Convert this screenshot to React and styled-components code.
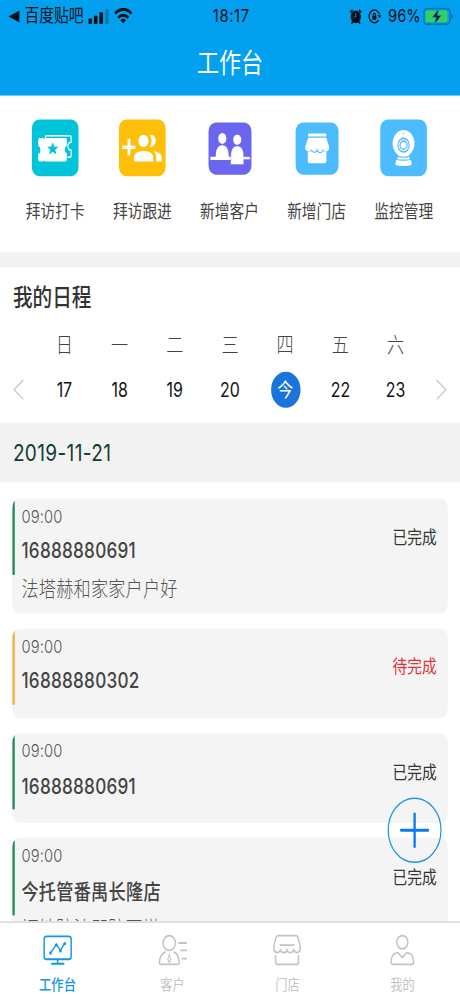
import styled, { createGlobalStyle } from "styled-components"

const actions = [
    { label: "拜访打卡", color: "#00c4d9", size: 38, icon: <TicketIcon /> },
    { label: "拜访跟进", color: "#ffbe08", size: 38, icon: <FollowIcon /> },
    { label: "新增客户", color: "#6a66f0", size: 35, icon: <PeopleIcon /> },
    { label: "新增门店", color: "#4cbcff", size: 35, icon: <StoreIcon /> },
    { label: "监控管理", color: "#4cbcff", size: 38, icon: <CameraIcon /> },
]

const weekdays = ["日", "一", "二", "三", "四", "五", "六"]
const days = ["17", "18", "19", "20", "今", "22", "23"]

const schedules = [
    { time: "09:00", title: "16888880691", desc: "法塔赫和家家户户好", done: true },
    { time: "09:00", title: "16888880302", done: false },
    { time: "09:00", title: "16888880691", done: true },
    { time: "09:00", title: "今托管番禺长隆店", desc: "福地防汕即防歪墩", done: true },
]

const tabs = [
    { label: "工作台", icon: <BoardIcon />, active: true },
    { label: "客户", icon: <ClientIcon /> },
    { label: "门店", icon: <ShopIcon /> },
    { label: "我的", icon: <MineIcon /> },
]

export default function App() {
    return (
        <>
            <GlobalStyle />
            <Screen>
                <Header>
                    <StatusBar>
                        <StatusLeft>
                            <BackApp />
                            <span>百度贴吧</span>
                            <SignalIcon />
                            <WifiIcon />
                        </StatusLeft>
                        <Clock>18:17</Clock>
                        <StatusRight>
                            <AlarmIcon />
                            <LockIcon />
                            <Percent>96%</Percent>
                            <BatteryIcon />
                        </StatusRight>
                    </StatusBar>
                    <NavTitle>工作台</NavTitle>
                </Header>

                <Actions>
                    {actions.map((item) => (
                        <Action key={item.label}>
                            <IconSlot>
                                <IconTile $color={item.color} $size={item.size}>{item.icon}</IconTile>
                            </IconSlot>
                            <ActionLabel>{item.label}</ActionLabel>
                        </Action>
                    ))}
                </Actions>

                <Calendar>
                    <SectionTitle>我的日程</SectionTitle>
                    <Week>
                        <span />
                        {weekdays.map((d) => <Weekday key={d}>{d}</Weekday>)}
                        <span />
                    </Week>
                    <Days>
                        <Arrow viewBox="0 0 10 14"><path d="M9 .6 1.5 7 9 13.4" /></Arrow>
                        {days.map((d) => <Day key={d} $today={d === "今"}>{d}</Day>)}
                        <Arrow viewBox="0 0 10 14"><path d="M1 .6 8.5 7 1 13.4" /></Arrow>
                    </Days>
                </Calendar>

                <DateBar>2019-11-21</DateBar>

                <List>
                    {schedules.map((item, index) => (
                        <Card key={index} $tall={!!item.desc}>
                            <Bar $done={item.done} />
                            <CardBody>
                                <Time>{item.time}</Time>
                                <CardTitle>{item.title}</CardTitle>
                                {item.desc && <Desc>{item.desc}</Desc>}
                            </CardBody>
                            <State $done={item.done}>{item.done ? "已完成" : "待完成"}</State>
                        </Card>
                    ))}
                </List>

                <AddButton aria-label="add">
                    <svg viewBox="0 0 24 24" width="24" height="24">
                        <path d="M12 1v22M1 12h22" stroke="#0a78f0" strokeWidth="1.9" strokeLinecap="round" />
                    </svg>
                </AddButton>

                <TabBar>
                    {tabs.map((tab) => (
                        <Tab key={tab.label} $active={tab.active}>
                            {tab.icon}
                            <span>{tab.label}</span>
                        </Tab>
                    ))}
                </TabBar>
            </Screen>
        </>
    )
}

function BackApp() {
    return <svg width="9" height="8" viewBox="0 0 9 8"><path d="M9 0v8L0 4z" fill="#04101a" /></svg>
}

function SignalIcon() {
    return (
        <svg width="17" height="10" viewBox="0 0 17 11" preserveAspectRatio="none" fill="#04101a">
            <rect x="0" y="7" width="3" height="4" rx=".7" />
            <rect x="4.5" y="5" width="3" height="6" rx=".7" />
            <rect x="9" y="2.5" width="3" height="8.5" rx=".7" />
            <rect x="13.8" y="0" width="3" height="11" rx=".7" opacity=".25" />
        </svg>
    )
}

function WifiIcon() {
    return (
        <svg width="15" height="11" viewBox="0 0 15 11" fill="none" stroke="#04101a" strokeWidth="2">
            <path d="M.8 4.1a9.7 9.7 0 0 1 13.4 0" />
            <path d="M3.3 6.9a6.1 6.1 0 0 1 8.4 0" />
            <path d="M7.5 10.8 5.2 8.5a3.4 3.4 0 0 1 4.6 0z" fill="#04101a" stroke="none" />
        </svg>
    )
}

function AlarmIcon() {
    return (
        <svg width="10" height="10" viewBox="0 0 10 10">
            <circle cx="5" cy="5.2" r="4.2" fill="#04101a" />
            <path d="M.6 2.4 2.4.7M9.4 2.4 7.6.7M1.5 9.8l1.2-1.4M8.5 9.8 7.3 8.4" stroke="#04101a" strokeWidth="1.3" />
            <path d="M5 2.8v2.6H3.4" stroke="#02a0ee" strokeWidth=".6" fill="none" />
        </svg>
    )
}

function LockIcon() {
    return (
        <svg width="11" height="10" viewBox="0 0 11 10" fill="none" stroke="#04101a">
            <path d="M8.6 7.6A4.3 4.3 0 1 1 9.3 3.6" strokeWidth="1" />
            <path d="M7.8 4.2H11L9.5 6.2z" fill="#04101a" stroke="none" />
            <path d="M3.6 4.6h3.2v2.6H3.6z" fill="#04101a" stroke="none" />
            <path d="M4.2 4.8V3.9a1 1 0 0 1 2 0v.9" strokeWidth=".8" />
        </svg>
    )
}

function BatteryIcon() {
    return (
        <svg width="25" height="12" viewBox="0 0 25 12">
            <rect x=".5" y=".7" width="21.4" height="10.6" rx="2.6" fill="none" stroke="#04507c" strokeOpacity=".6" />
            <rect x="1.9" y="2.1" width="17.8" height="7.8" rx="1.3" fill="#35cf5b" />
            <path d="M23 4.2c1.4.4 1.4 3.2 0 3.6z" fill="#04507c" opacity=".7" />
            <path d="m12.7.8-5.2 5.8h3.1L9 11.2l5.8-5.8h-3.2z" fill="#04101a" stroke="#02a0ee" strokeWidth=".5" />
        </svg>
    )
}

function TicketIcon() {
    return (
        <svg viewBox="0 0 38 38">
            <path d="M11 12.5v-.6a1 1 0 0 1 1-1h19a1 1 0 0 1 1 1v3.4a2.7 2.7 0 0 0 0 5.4v3.6a1 1 0 0 1-1 1h-2" fill="none" stroke="#fff" strokeWidth="1" />
            <path d="M5.9 12.4h3.2q.6 1.2 1.4 0h16.7a1.3 1.3 0 0 1 1.3 1.3v3.7a3 3 0 0 0 0 5.4v4a1.3 1.3 0 0 1-1.3 1.3H10.4q-.8-1.2-1.4 0H6.4a1.3 1.3 0 0 1-1.3-1.3v-3.6a3 3 0 0 0 0-5.6v-3.9z" fill="#fff" />
            <path d="m17 15.2 1.4 3h3.3L19 20.3l1.1 3.3-3.1-2-3.1 2 1.1-3.3-2.6-2.1h3.2z" fill="#00c4d9" />
        </svg>
    )
}

function FollowIcon() {
    return (
        <svg viewBox="0 0 38 38" fill="#fff">
            <path d="M7 13h2.3v4.5h4.3v2.2H9.3v4.4H7v-4.4H2.5v-2.2H7z" />
            <circle cx="20" cy="14.3" r="4.1" />
            <path d="M25 10.3a4.1 4.1 0 1 1 0 8 6.5 6.5 0 0 0 0-8z" />
            <path d="M12.2 28.2v-2.5c0-3.2 4-4.5 7.9-4.5s7.9 1.3 7.9 4.5v2.5z" />
            <path d="M28.3 21.3c3.4.3 6.6 1.7 6.6 4.5v2.4h-4.6v-2.5c0-1.9-.7-3.3-2-4.4z" />
        </svg>
    )
}

function PeopleIcon() {
    return (
        <svg viewBox="0 0 35 35" fill="#fff">
            <ellipse cx="11.2" cy="10.7" rx="3.3" ry="3.6" />
            <path d="M5.9 23c0-4.8 1.6-7.8 5.3-7.8s5.3 3 5.3 7.8H19v2.2H1.5V23z" />
            <ellipse cx="23.4" cy="11.5" rx="3.3" ry="3.5" />
            <path d="M18.1 28.2V23c0-4.6 1.6-7.3 5.3-7.3s5.3 2.7 5.3 7.3h5.2v1.8h-5.2v3.4z" stroke="#6a66f0" strokeWidth=".3" />
        </svg>
    )
}

function StoreIcon() {
    return (
        <svg viewBox="0 0 35 35" fill="#fff">
            <rect x="10.2" y="7.4" width="14.8" height="2" rx=".3" />
            <path d="M10.3 10.3H25L27.2 16a2.4 2.4 0 0 1-4.8 1.7 2.4 2.4 0 0 1-4.8 0 2.4 2.4 0 0 1-4.8 0A2.4 2.4 0 0 1 8 16z" />
            <path d="M9.9 19.6c1.3.2 2.3-.1 3.1-.6 1.4 1.2 3.2 1.2 4.6 0 1.4 1.2 3.2 1.2 4.6 0 .8.6 1.8.8 2.9.6v6.2a1.6 1.6 0 0 1-1.6 1.6h-12a1.6 1.6 0 0 1-1.6-1.6z" />
            <path d="M12.9 18.4a2.5 2.5 0 0 0 4.7 0 2.5 2.5 0 0 0 4.8 0" fill="none" stroke="#4cbcff" strokeWidth=".8" />
        </svg>
    )
}

function CameraIcon() {
    return (
        <svg viewBox="0 0 38 38">
            <path d="M14.5 23.5h9l.4 3.3H14zM13 27.2c4 .7 8 .7 12 0l.8 2.9c-3 1.4-10.6 1.4-13.6 0z" fill="#fff" />
            <circle cx="19" cy="16" r="8.9" fill="#fff" />
            <path d="M13.5 24.3c3 1.3 8 1.3 11 0" fill="none" stroke="#4cbcff" strokeWidth=".7" />
            <circle cx="19" cy="17.2" r="4.6" fill="#eaf7ff" stroke="#4cbcff" strokeWidth=".9" />
            <circle cx="19" cy="17.2" r="2.8" fill="#fff" stroke="#4cbcff" strokeWidth=".9" />
            <circle cx="19" cy="9.6" r=".5" fill="#4cbcff" />
        </svg>
    )
}

function BoardIcon() {
    return (
        <svg viewBox="0 0 24 24">
            <rect x="1" y="3.1" width="22" height="15.3" rx="1.8" />
            <path d="M12 18.4v2.6M6.8 21.4h10.6" />
            <path d="m6.4 14 4.5-5.5 3.4 3.9L17.6 8" strokeWidth="1" />
            <g fill="currentColor" stroke="none">
                <circle cx="6.2" cy="14.2" r="1.1" />
                <circle cx="10.9" cy="8.7" r="1.1" />
                <circle cx="14.3" cy="12.8" r="1.1" />
                <circle cx="17.8" cy="7.9" r="1.1" />
            </g>
        </svg>
    )
}

function ClientIcon() {
    return (
        <svg viewBox="0 0 24 24">
            <circle cx="9" cy="7.5" r="5" />
            <path d="M6 13.3C2.5 14.7 1 17.2 1 20.6c0 .8.4 1.2 1.2 1.2h13.6c.8 0 1.2-.4 1.2-1.2 0-3.4-1.5-5.9-4.5-7.3" />
            <path d="M9 14.3v1.2l-1.3 3L9 20.6l1.3-2.1-1.3-3" strokeWidth=".8" />
            <path d="M16.4 7.5h7M18 12.5h5.4M19 18h4.4" />
        </svg>
    )
}

function ShopIcon() {
    return (
        <svg viewBox="0 0 24 24">
            <path d="M4.8 2.5h14.4c.8 0 1.3.4 1.6 1.1 1.2 3 1.9 5.2 2 7.2.1 3.3-3.8 4.3-5.4 1.4-1 2.4-4.3 2.4-5.4 0-1.1 2.4-4.4 2.4-5.4 0-1.6 2.9-5.5 1.9-5.4-1.4.1-2 .8-4.2 2-7.2.3-.7.8-1.1 1.6-1.1z" />
            <path d="M6 9h12M2.7 15.5v5.1c0 .8.4 1.2 1.2 1.2h16.2c.8 0 1.2-.4 1.2-1.2v-5.1" />
        </svg>
    )
}

function MineIcon() {
    return (
        <svg viewBox="0 0 24 24">
            <circle cx="12" cy="7" r="4.5" />
            <path d="m12 17.3-3.2-3c-2.2-.8-5.9 1.3-5.9 4.7v1.2c0 1 .6 1.6 1.6 1.6h15c1 0 1.6-.6 1.6-1.6V19c0-3.4-3.7-5.5-5.9-4.7z" strokeLinejoin="round" />
        </svg>
    )
}

const GlobalStyle = createGlobalStyle`
    * {
        box-sizing: border-box;
    }

    html, body, #root {
        height: 996px;
    }

    body {
        margin: 0;
        background: #fff;
        font-family: Inter, "Noto Sans CJK SC", sans-serif;
    }

    svg {
        display: block;
        flex: none;
    }
`

const Screen = styled.div`
    position: relative;
    display: flex;
    flex-direction: column;
    width: 375px;
    height: 667px;
    overflow: hidden;
    background: #fff;
    transform: scale(1.22667, 1.49325);
    transform-origin: 0 0;
`

const Header = styled.header`
    flex: none;
    height: 64px;
    background: #02a0ee;
`

const StatusBar = styled.div`
    display: grid;
    grid-template-columns: 1fr auto 1fr;
    align-items: center;
    height: 20px;
    padding: 0 5px 0 7px;
    font-size: 12px;
    line-height: 20px;
    color: #04101a;
`

const StatusLeft = styled.div`
    display: flex;
    align-items: center;
    gap: 4px;

    span {
        padding-top: 1px;
        font-weight: 400;
    }
`

const Clock = styled.span`
    font-weight: 400;
    letter-spacing: .5px;
`

const StatusRight = styled.div`
    display: flex;
    align-items: center;
    justify-content: flex-end;
    gap: 5px;
`

const Percent = styled.span`
    margin-right: -3px;
`

const NavTitle = styled.h1`
    margin: 0;
    padding-top: .7px;
    font-size: 18px;
    font-weight: 400;
    line-height: 44px;
    text-align: center;
    color: #fff;
`

const Actions = styled.section`
    flex: none;
    display: flex;
    height: 105px;
    padding: 16px 10.4px 0 9.6px;
`

const Action = styled.div`
    flex: 1;
    display: flex;
    flex-direction: column;
    align-items: center;
`

const IconSlot = styled.div`
    display: flex;
    align-items: center;
    height: 38px;
`

const IconTile = styled.div`
    width: ${props => props.$size}px;
    height: ${props => props.$size}px;
    border-radius: 6px;
    background: ${props => props.$color};
`

const ActionLabel = styled.span`
    margin-top: 14.3px;
    font-size: 12px;
    line-height: 20px;
    color: #444;
`

const Calendar = styled.section`
    flex: none;
    height: 114px;
    border-top: 10px solid #f2f2f2;
`

const SectionTitle = styled.h2`
    margin: 0;
    padding: 8.2px 10px 0 10.5px;
    font-size: 16px;
    font-weight: 500;
    line-height: 24px;
    color: #333;
`

const Week = styled.div`
    display: grid;
    grid-template-columns: 30px repeat(7, 45px) 30px;
    margin-top: 10px;
    text-align: center;
`

const Weekday = styled.span`
    font-size: 14px;
    font-weight: 300;
    line-height: 20px;
    color: #444;
`

const Days = styled(Week)`
    align-items: center;
    justify-items: center;
    margin-top: 7.8px;
`

const Day = styled.span`
    width: 24px;
    height: 24px;
    border-radius: 50%;
    font-size: 13px;
    line-height: 24.8px;
    color: ${props => props.$today ? "#fff" : "#111"};
    background: ${props => props.$today ? "#1b74dc" : "transparent"};
`

const Arrow = styled.svg`
    width: 10px;
    height: 14px;
    fill: none;
    stroke: #c8c8c8;
    stroke-width: 1;
`

const DateBar = styled.div`
    flex: none;
    height: 40px;
    padding-left: 10.5px;
    font-size: 15.5px;
    letter-spacing: .3px;
    line-height: 41px;
    color: #123c33;
    background: #f2f2f2;
`

const List = styled.main`
    flex: 1;
    display: flex;
    flex-direction: column;
    gap: 10px;
    min-height: 0;
    padding: 10.7px 10.5px 0 10px;
    overflow: hidden;
`

const Card = styled.article`
    flex: none;
    display: flex;
    height: ${props => props.$tall ? 77 : 60.3}px;
    border-radius: 6px;
    overflow: hidden;
    background: #f4f4f4;
`

const Bar = styled.div`
    width: 2.2px;
    height: 50px;
    margin-top: 1.5px;
    background: ${props => props.$done ? "#1d8a57" : "#f5b02e"};
`

const CardBody = styled.div`
    flex: 1;
    padding: 4px 0 0 5.3px;
    white-space: nowrap;
`

const Time = styled.div`
    font-size: 12px;
    font-weight: 300;
    line-height: 16px;
    letter-spacing: .1px;
    color: #555;
`

const CardTitle = styled.div`
    margin-top: 3.8px;
    font-size: 14px;
    font-weight: 500;
    line-height: 23px;
    letter-spacing: .2px;
    color: #444;
`

const Desc = styled.div`
    margin-top: 1.8px;
    font-size: 14px;
    font-weight: 300;
    line-height: 23px;
    letter-spacing: .15px;
    color: #555;
`

const State = styled.div`
    padding: 16.6px 8.5px 0 0;
    font-size: 12px;
    line-height: 20px;
    color: ${props => props.$done ? "#333" : "#e03535"};
`

const AddButton = styled.button`
    position: absolute;
    right: 15px;
    bottom: 89px;
    display: flex;
    align-items: center;
    justify-content: center;
    width: 44px;
    height: 44px;
    padding: 0;
    border: 1px solid #2196e0;
    border-radius: 50%;
    background: transparent;
`

const TabBar = styled.nav`
    flex: none;
    display: flex;
    height: 49.6px;
    border-top: 1px solid #d6d6d6;
    background: #fff;
`

const Tab = styled.div`
    flex: 1;
    display: flex;
    flex-direction: column;
    align-items: center;
    padding-top: 5.6px;
    font-size: 10px;
    font-weight: ${props => props.$active ? 500 : 400};
    line-height: 14px;
    color: ${props => props.$active ? "#1296e6" : "#c4c4c4"};

    svg {
        width: 24px;
        height: 24px;
        margin-bottom: 4px;
        fill: none;
        stroke: currentColor;
        stroke-width: 1.2;
    }
`
